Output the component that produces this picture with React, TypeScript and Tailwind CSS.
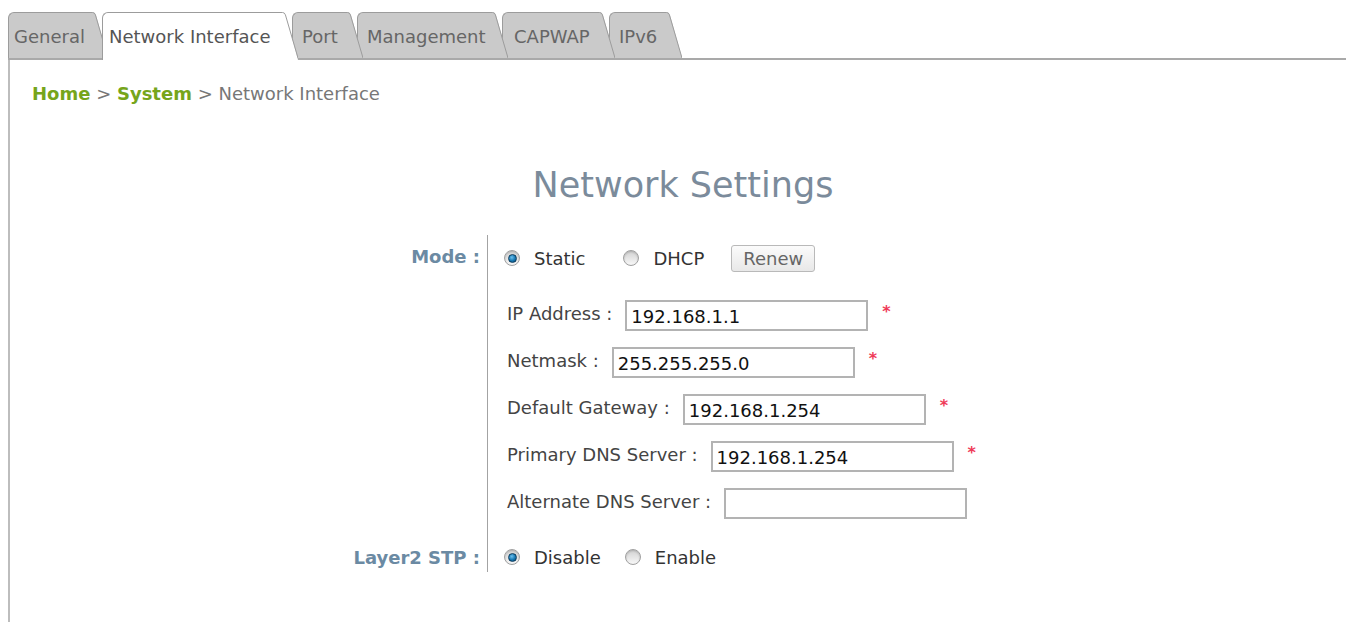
import React from 'react';

type Tab = { label: string; body: string; z: string; active?: boolean };

// body widths / text insets for each tab, written out so Tailwind picks them up
const tabs: Tab[] = [
  { label: 'General', body: 'w-[82px] pl-[5px]', z: 'z-[6]' },
  { label: 'Network Interface', body: 'w-[178px] pl-[6px]', z: 'z-[7]', active: true },
  { label: 'Port', body: 'w-[53px] pl-[9px]', z: 'z-[4]' },
  { label: 'Management', body: 'w-[133px] pl-[9px]', z: 'z-[3]' },
  { label: 'CAPWAP', body: 'w-[95px] pl-[11px]', z: 'z-[2]' },
  { label: 'IPv6', body: 'w-[55px] pl-[9px]', z: 'z-[1]' },
];

const TabItem = ({ tab, first }: { tab: Tab; first: boolean }) => {
  const fill = tab.active ? '#ffffff' : '#cacaca';
  const h = tab.active ? 48 : 46;
  return (
    <div
      className={`relative flex ${tab.z} ${first ? '' : '-ml-[6px]'} ${
        tab.active ? '-mb-[2px] h-[48px]' : 'h-[46px]'
      }`}
    >
      <div
        className={`flex items-center whitespace-nowrap rounded-tl-[6px] border-l border-t border-[#9c9c9c] pt-[1px] text-[18px] ${
          tab.body
        } ${tab.active ? 'items-start pt-[10px] bg-white text-[#555]' : 'bg-[#cacaca] text-[#666]'}`}
      >
        {tab.label}
      </div>
      {/* slanted right edge of the tab */}
      <svg width="18" height={h} className="block shrink-0">
        <path d={`M0 0 H2.5 Q5 0 5.8 2.6 L18 ${h} H0 Z`} fill={fill} />
        <path d="M0 0.5 H2.5 Q4.6 0.5 5.4 2.8 L18 46" fill="none" stroke="#9c9c9c" strokeWidth="1" />
      </svg>
    </div>
  );
};

const Radio = ({ on }: { on?: boolean }) => (
  <span className="flex h-[16px] w-[16px] shrink-0 items-center justify-center rounded-full border border-[#a0a0a0] bg-linear-to-b from-[#d2d2d2] to-[#f8f8f8] shadow-[inset_0_1px_2px_rgba(0,0,0,0.18)]">
    {on && (
      <span className="h-[9px] w-[9px] rounded-full border border-[#0c3d5e] bg-[radial-gradient(circle_at_40%_35%,#6cc0ee,#1576b0_55%,#0b4772)]" />
    )}
  </span>
);

const Choice = ({ on, label, gap }: { on?: boolean; label: string; gap: string }) => (
  <label className={`flex items-center ${gap}`}>
    <Radio on={on} />
    <span className="ml-[14px] text-[#333]">{label}</span>
  </label>
);

const fields = [
  { label: 'IP Address :', value: '192.168.1.1', req: true },
  { label: 'Netmask :', value: '255.255.255.0', req: true },
  { label: 'Default Gateway :', value: '192.168.1.254', req: true },
  { label: 'Primary DNS Server :', value: '192.168.1.254', req: true },
  { label: 'Alternate DNS Server :', value: '', req: false },
];

export default function App() {
  return (
    <div className="flex h-screen flex-col bg-white pl-2 pt-[12px] font-['Verdana','DejaVu_Sans',sans-serif] text-[18px]">
      {/* tab strip */}
      <div className="flex items-end border-b-2 border-[#a9a9a9]">
        {tabs.map((t, i) => (
          <TabItem key={t.label} tab={t} first={i === 0} />
        ))}
      </div>

      <div className="flex-1 border-l-2 border-[#bdbdbd]">
        {/* breadcrumb */}
        <div className="pl-[22px] pt-[23px] leading-[22px] text-[#777]">
          <span className="font-bold text-[#76a51b]">Home</span> &gt;{' '}
          <span className="font-bold text-[#76a51b]">System</span> &gt; Network Interface
        </div>

        <h1 className="mt-[59px] pl-[10px] text-center text-[35px] leading-[42px] text-[#7b8b9b]">
          Network Settings
        </h1>

        <div className="mt-[29px] grid grid-cols-[477px_auto]">
          {/* mode */}
          <div className="flex h-[46px] items-center justify-end pb-[3px] pr-[7px] font-bold text-[#6b8aa3]">Mode :</div>
          <div className="flex h-[46px] items-center border-l border-[#a3a3a3] pl-[16px]">
            <Choice on label="Static" gap="" />
            <Choice label="DHCP" gap="ml-[38px]" />
            <button className="ml-[27px] flex h-[27px] w-[84px] items-center justify-center rounded-[3px] border border-[#b9b9b9] bg-linear-to-b from-[#fbfbfb] to-[#e8e8e8] text-[#666]">
              Renew
            </button>
          </div>

          {/* address fields */}
          <div />
          <div className="flex flex-col gap-[16px] border-l border-[#a3a3a3] pb-[23px] pl-[19px] pt-[19px]">
            {fields.map((f) => (
              <div key={f.label} className="flex h-[31px] items-center">
                <span className="-mt-[4px] whitespace-nowrap text-[#444]">{f.label}</span>
                <input
                  readOnly
                  value={f.value}
                  className="ml-[13px] h-[31px] w-[243px] border-2 border-[#b3b3b3] bg-white pl-[4px] pt-[2px] text-[18px] text-[#111] outline-none"
                />
                {f.req && (
                  <span className="-mt-[8px] ml-[14px] text-[16px] font-bold leading-none text-[#ef3a58]">*</span>
                )}
              </div>
            ))}
          </div>

          {/* spanning tree */}
          <div className="flex h-[30px] items-center justify-end pr-[7px] font-bold text-[#6b8aa3]">Layer2 STP :</div>
          <div className="flex h-[30px] items-center border-l border-[#a3a3a3] pl-[16px]">
            <Choice on label="Disable" gap="" />
            <Choice label="Enable" gap="ml-[24px]" />
          </div>
        </div>
      </div>
    </div>
  );
}
